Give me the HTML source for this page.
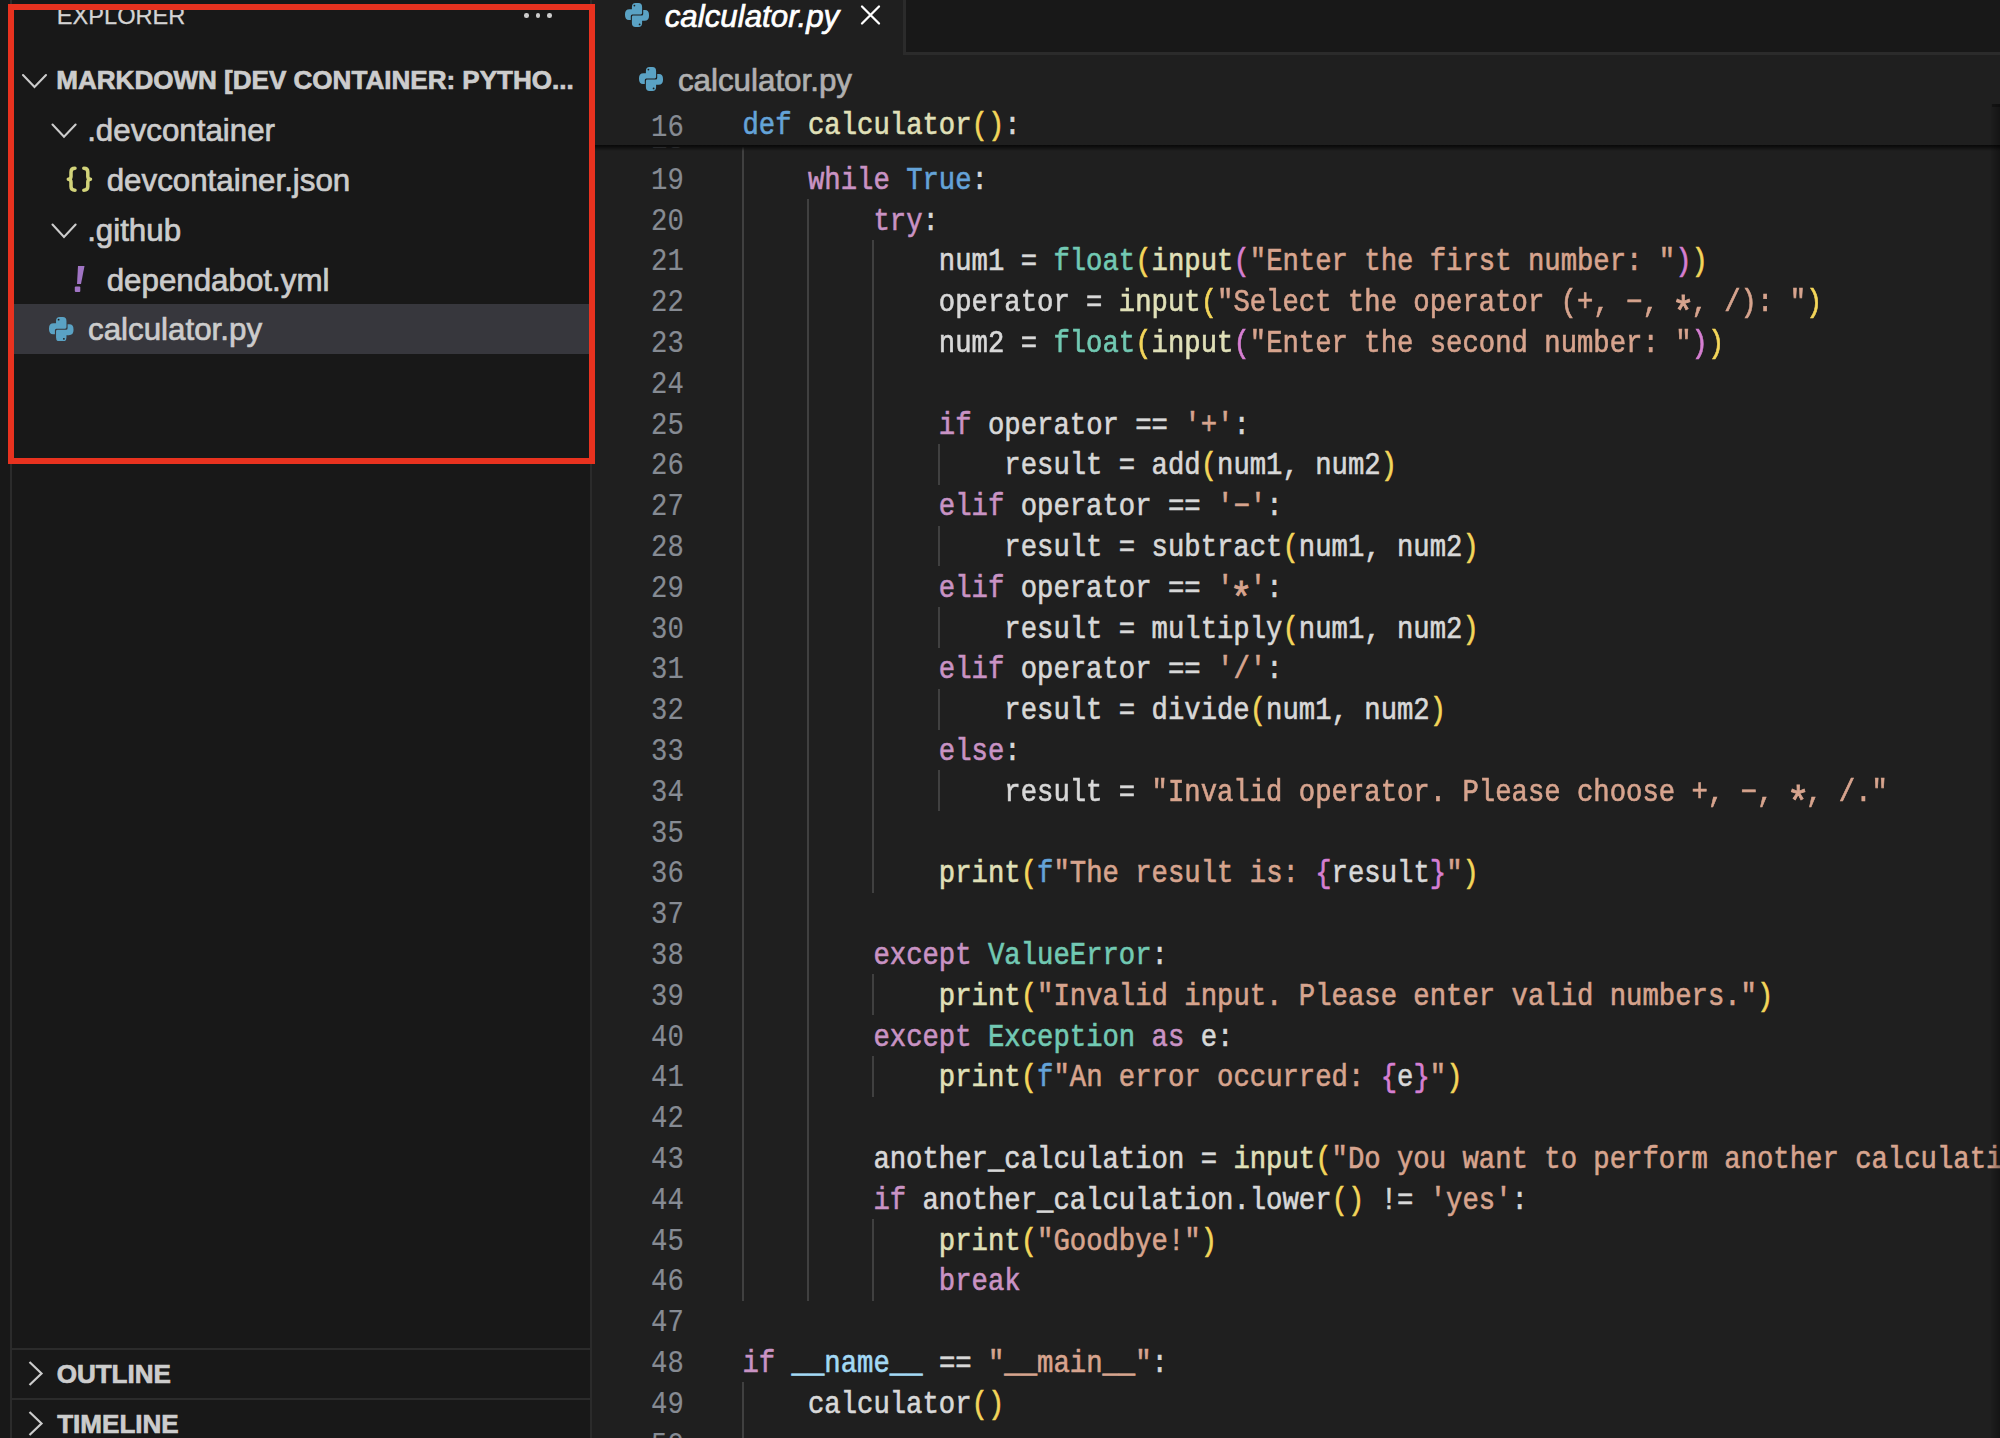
<!DOCTYPE html><html><head><meta charset="utf-8"><style>
*{margin:0;padding:0;box-sizing:border-box}
html,body{width:2000px;height:1438px;overflow:hidden;background:#181818}
.a{position:absolute}
.t{position:absolute;line-height:0;white-space:pre}
.sans{font-family:"Liberation Sans",sans-serif;-webkit-text-stroke:0.7px currentColor}
.mono{font-family:"Liberation Mono",monospace}
.cl{-webkit-text-stroke:0.55px currentColor;position:absolute;line-height:0;white-space:pre;font-family:"Liberation Mono",monospace;font-size:27.279px;color:#d4d4d4;transform:scaleY(1.120);transform-origin:0 7.259px}
.ln{position:absolute;line-height:0;white-space:pre;font-family:"Liberation Mono",monospace;font-size:27.279px;color:#868b93;-webkit-text-stroke:0.15px currentColor;text-align:right;width:200px;transform:scaleY(1.120);transform-origin:0 7.259px}
.g{position:absolute;width:2px;background:#404040}
</style></head><body>

<div class="a" style="left:9.5px;top:0;width:2.3px;height:1438px;background:#2b2b2b"></div>
<div class="a" style="left:589.7px;top:0;width:2.5px;height:1438px;background:#2b2b2b"></div>
<div class="t sans" style="left:56.86px;top:16.02px;font-size:23.60px;color:#d4d4d4;font-weight:normal;font-style:normal;-webkit-text-stroke:0.25px #d4d4d4">EXPLORER</div>
<div class="a" style="left:524.1px;top:13px;width:4.6px;height:4.6px;border-radius:50%;background:#cccccc"></div>
<div class="a" style="left:535.6px;top:13px;width:4.6px;height:4.6px;border-radius:50%;background:#cccccc"></div>
<div class="a" style="left:547.0px;top:13px;width:4.6px;height:4.6px;border-radius:50%;background:#cccccc"></div>
<svg class="a" style="left:0;top:0" width="600" height="1438"><polyline points="23.0,75.0 34.5,87.0 46.0,75.0" fill="none" stroke="#cccccc" stroke-width="2.1" stroke-linecap="round"/></svg>
<div class="t sans" style="left:56.26px;top:80.37px;font-size:26.05px;color:#cccccc;font-weight:bold;font-style:normal;">MARKDOWN [DEV CONTAINER: PYTHO...</div>
<svg class="a" style="left:0;top:0" width="600" height="1438"><polyline points="52.5,124.5 64.0,136.7 75.6,124.5" fill="none" stroke="#cccccc" stroke-width="2.1" stroke-linecap="round"/></svg>
<div class="t sans" style="left:87.14px;top:131.05px;font-size:31.30px;color:#cccccc;font-weight:normal;font-style:normal;">.devcontainer</div>
<svg class="a" style="left:0;top:0" width="120" height="220"><g fill="none" stroke="#d2d37a" stroke-width="3.5" stroke-linecap="round" stroke-linejoin="round"><path d="M75 168.3Q71 168.3 71 172V176.5Q71 179 68.3 179.2Q71 179.4 71 182V186.5Q71 190.2 75 190.2"/><path d="M83.8 168.3Q87.8 168.3 87.8 172V176.5Q87.8 179 90.5 179.2Q87.8 179.4 87.8 182V186.5Q87.8 190.2 83.8 190.2"/></g></svg>
<div class="t sans" style="left:106.69px;top:181.25px;font-size:31.30px;color:#cccccc;font-weight:normal;font-style:normal;">devcontainer.json</div>
<svg class="a" style="left:0;top:0" width="600" height="1438"><polyline points="52.5,224.5 64.0,236.9 75.6,224.5" fill="none" stroke="#cccccc" stroke-width="2.1" stroke-linecap="round"/></svg>
<div class="t sans" style="left:87.14px;top:231.05px;font-size:31.30px;color:#cccccc;font-weight:normal;font-style:normal;">.github</div>
<svg class="a" style="left:0;top:0" width="200" height="400"><polygon points="78,266 84.5,266 81,284 77,284" fill="#a074c4"/><rect x="74.8" y="286.5" width="5.5" height="5.5" rx="1" fill="#a074c4"/></svg>
<div class="t sans" style="left:106.69px;top:281.25px;font-size:31.30px;color:#cccccc;font-weight:normal;font-style:normal;">dependabot.yml</div>
<div class="a" style="left:12px;top:304px;width:577.7px;height:50px;background:#37373d"></div>
<svg class="a" style="left:49.0px;top:316.5px" width="24.5" height="24.5" viewBox="0 0 24 24"><g fill="#5aa2c4"><path d="M6.9 4Q6.9 0 10.5 0H13.5Q17.1 0 17.1 4V10Q17.1 11.4 15.7 11.4H7.3Q5.8 11.4 5.8 12.9V17H4Q0 17 0 12V11Q0 6.2 4.5 6.2H6.9Z"/><path d="M17.1 20Q17.1 24 13.5 24H10.5Q6.9 24 6.9 20V14Q6.9 12.6 8.3 12.6H16.7Q18.2 12.6 18.2 11.1V7H20Q24 7 24 12V13Q24 17.8 19.5 17.8H17.1Z"/></g><circle cx="9.4" cy="2.6" r="0.9" fill="#1f1f1f"/><circle cx="14.6" cy="21.4" r="0.9" fill="#1f1f1f"/></svg>
<div class="t sans" style="left:88.07px;top:330.15px;font-size:31.30px;color:#cccccc;font-weight:normal;font-style:normal;">calculator.py</div>
<div class="a" style="left:12px;top:1347.5px;width:579px;height:2px;background:#2b2b2b"></div>
<div class="a" style="left:12px;top:1397.5px;width:579px;height:2px;background:#2b2b2b"></div>
<svg class="a" style="left:0;top:0" width="100" height="1438"><polyline points="29.5,1362.0 41.5,1373.5 29.5,1385.0" fill="none" stroke="#cccccc" stroke-width="2.2"/></svg>
<div class="t sans" style="left:56.63px;top:1374.07px;font-size:26.05px;color:#cccccc;font-weight:bold;font-style:normal;">OUTLINE</div>
<svg class="a" style="left:0;top:0" width="100" height="1438"><polyline points="29.5,1412.0 41.5,1423.5 29.5,1435.0" fill="none" stroke="#cccccc" stroke-width="2.2"/></svg>
<div class="t sans" style="left:57.19px;top:1424.07px;font-size:26.05px;color:#cccccc;font-weight:bold;font-style:normal;">TIMELINE</div>
<div class="a" style="left:592.2px;top:0;width:1408px;height:1438px;background:#1f1f1f"></div>
<div class="a" style="left:905.5px;top:0;width:1095px;height:53px;background:#181818"></div>
<div class="a" style="left:903px;top:52.3px;width:1097px;height:2.5px;background:#2b2b2b"></div>
<div class="a" style="left:903px;top:0;width:2.5px;height:54.8px;background:#2b2b2b"></div>
<svg class="a" style="left:624.9px;top:2.8px" width="24.0" height="24.0" viewBox="0 0 24 24"><g fill="#5aa2c4"><path d="M6.9 4Q6.9 0 10.5 0H13.5Q17.1 0 17.1 4V10Q17.1 11.4 15.7 11.4H7.3Q5.8 11.4 5.8 12.9V17H4Q0 17 0 12V11Q0 6.2 4.5 6.2H6.9Z"/><path d="M17.1 20Q17.1 24 13.5 24H10.5Q6.9 24 6.9 20V14Q6.9 12.6 8.3 12.6H16.7Q18.2 12.6 18.2 11.1V7H20Q24 7 24 12V13Q24 17.8 19.5 17.8H17.1Z"/></g><circle cx="9.4" cy="2.6" r="0.9" fill="#1f1f1f"/><circle cx="14.6" cy="21.4" r="0.9" fill="#1f1f1f"/></svg>
<div class="t sans" style="left:664.68px;top:16.65px;font-size:31.30px;color:#ffffff;font-weight:normal;font-style:italic;">calculator.py</div>
<svg class="a" style="left:850px;top:0px" width="40" height="30"><path d="M12 6.5L29 23.5M29 6.5L12 23.5" stroke="#ffffff" stroke-width="2.3" stroke-linecap="round"/></svg>
<svg class="a" style="left:638.9px;top:66.9px" width="24.0" height="24.0" viewBox="0 0 24 24"><g fill="#5aa2c4"><path d="M6.9 4Q6.9 0 10.5 0H13.5Q17.1 0 17.1 4V10Q17.1 11.4 15.7 11.4H7.3Q5.8 11.4 5.8 12.9V17H4Q0 17 0 12V11Q0 6.2 4.5 6.2H6.9Z"/><path d="M17.1 20Q17.1 24 13.5 24H10.5Q6.9 24 6.9 20V14Q6.9 12.6 8.3 12.6H16.7Q18.2 12.6 18.2 11.1V7H20Q24 7 24 12V13Q24 17.8 19.5 17.8H17.1Z"/></g><circle cx="9.4" cy="2.6" r="0.9" fill="#1f1f1f"/><circle cx="14.6" cy="21.4" r="0.9" fill="#1f1f1f"/></svg>
<div class="t sans" style="left:677.97px;top:81.25px;font-size:31.30px;color:#b0b0b0;font-weight:normal;font-style:normal;">calculator.py</div>
<div class="g" style="left:741.50px;top:158.40px;height:1142.40px"></div>
<div class="g" style="left:806.98px;top:199.20px;height:1101.60px"></div>
<div class="g" style="left:872.46px;top:240.00px;height:652.80px"></div>
<div class="g" style="left:937.94px;top:444.00px;height:40.80px"></div>
<div class="g" style="left:937.94px;top:525.60px;height:40.80px"></div>
<div class="g" style="left:937.94px;top:607.20px;height:40.80px"></div>
<div class="g" style="left:937.94px;top:688.80px;height:40.80px"></div>
<div class="g" style="left:937.94px;top:770.40px;height:40.80px"></div>
<div class="g" style="left:872.46px;top:974.40px;height:40.80px"></div>
<div class="g" style="left:872.46px;top:1056.00px;height:40.80px"></div>
<div class="g" style="left:872.46px;top:1219.20px;height:81.60px"></div>
<div class="g" style="left:741.50px;top:1382.40px;height:81.60px"></div>
<div class="g" style="left:741.50px;top:147px;height:11.40px"></div>
<div class="ln" style="left:483.80px;top:181.74px">19</div>
<div class="cl" style="left:742.50px;top:181.74px"><span style="color:#d8d8d8">    </span><span style="color:#c993c4">while</span><span style="color:#d8d8d8"> </span><span style="color:#64a3d8">True</span><span style="color:#d8d8d8">:</span></div>
<div class="ln" style="left:483.80px;top:222.54px">20</div>
<div class="cl" style="left:742.50px;top:222.54px"><span style="color:#d8d8d8">        </span><span style="color:#c993c4">try</span><span style="color:#d8d8d8">:</span></div>
<div class="ln" style="left:483.80px;top:263.34px">21</div>
<div class="cl" style="left:742.50px;top:263.34px"><span style="color:#d8d8d8">            num1 = </span><span style="color:#72c9b3">float</span><span style="color:#f4d65a">(</span><span style="color:#e0e0b8">input</span><span style="color:#d67fd2">(</span><span style="color:#d7a48e">"Enter the first number: "</span><span style="color:#d67fd2">)</span><span style="color:#f4d65a">)</span></div>
<div class="ln" style="left:483.80px;top:304.14px">22</div>
<div class="cl" style="left:742.50px;top:304.14px"><span style="color:#d8d8d8">            operator = </span><span style="color:#e0e0b8">input</span><span style="color:#f4d65a">(</span><span style="color:#d7a48e">"Select the operator (+, −, <span style="display:inline-block;transform:translateY(10.9px) scale(1.4)">*</span>, /): "</span><span style="color:#f4d65a">)</span></div>
<div class="ln" style="left:483.80px;top:344.94px">23</div>
<div class="cl" style="left:742.50px;top:344.94px"><span style="color:#d8d8d8">            num2 = </span><span style="color:#72c9b3">float</span><span style="color:#f4d65a">(</span><span style="color:#e0e0b8">input</span><span style="color:#d67fd2">(</span><span style="color:#d7a48e">"Enter the second number: "</span><span style="color:#d67fd2">)</span><span style="color:#f4d65a">)</span></div>
<div class="ln" style="left:483.80px;top:385.74px">24</div>
<div class="ln" style="left:483.80px;top:426.54px">25</div>
<div class="cl" style="left:742.50px;top:426.54px"><span style="color:#d8d8d8">            </span><span style="color:#c993c4">if</span><span style="color:#d8d8d8"> operator == </span><span style="color:#d7a48e">'+'</span><span style="color:#d8d8d8">:</span></div>
<div class="ln" style="left:483.80px;top:467.34px">26</div>
<div class="cl" style="left:742.50px;top:467.34px"><span style="color:#d8d8d8">                result = add</span><span style="color:#f4d65a">(</span><span style="color:#d8d8d8">num1, num2</span><span style="color:#f4d65a">)</span></div>
<div class="ln" style="left:483.80px;top:508.14px">27</div>
<div class="cl" style="left:742.50px;top:508.14px"><span style="color:#d8d8d8">            </span><span style="color:#c993c4">elif</span><span style="color:#d8d8d8"> operator == </span><span style="color:#d7a48e">'−'</span><span style="color:#d8d8d8">:</span></div>
<div class="ln" style="left:483.80px;top:548.94px">28</div>
<div class="cl" style="left:742.50px;top:548.94px"><span style="color:#d8d8d8">                result = subtract</span><span style="color:#f4d65a">(</span><span style="color:#d8d8d8">num1, num2</span><span style="color:#f4d65a">)</span></div>
<div class="ln" style="left:483.80px;top:589.74px">29</div>
<div class="cl" style="left:742.50px;top:589.74px"><span style="color:#d8d8d8">            </span><span style="color:#c993c4">elif</span><span style="color:#d8d8d8"> operator == </span><span style="color:#d7a48e">'<span style="display:inline-block;transform:translateY(10.9px) scale(1.4)">*</span>'</span><span style="color:#d8d8d8">:</span></div>
<div class="ln" style="left:483.80px;top:630.54px">30</div>
<div class="cl" style="left:742.50px;top:630.54px"><span style="color:#d8d8d8">                result = multiply</span><span style="color:#f4d65a">(</span><span style="color:#d8d8d8">num1, num2</span><span style="color:#f4d65a">)</span></div>
<div class="ln" style="left:483.80px;top:671.34px">31</div>
<div class="cl" style="left:742.50px;top:671.34px"><span style="color:#d8d8d8">            </span><span style="color:#c993c4">elif</span><span style="color:#d8d8d8"> operator == </span><span style="color:#d7a48e">'/'</span><span style="color:#d8d8d8">:</span></div>
<div class="ln" style="left:483.80px;top:712.14px">32</div>
<div class="cl" style="left:742.50px;top:712.14px"><span style="color:#d8d8d8">                result = divide</span><span style="color:#f4d65a">(</span><span style="color:#d8d8d8">num1, num2</span><span style="color:#f4d65a">)</span></div>
<div class="ln" style="left:483.80px;top:752.94px">33</div>
<div class="cl" style="left:742.50px;top:752.94px"><span style="color:#d8d8d8">            </span><span style="color:#c993c4">else</span><span style="color:#d8d8d8">:</span></div>
<div class="ln" style="left:483.80px;top:793.74px">34</div>
<div class="cl" style="left:742.50px;top:793.74px"><span style="color:#d8d8d8">                result = </span><span style="color:#d7a48e">"Invalid operator. Please choose +, −, <span style="display:inline-block;transform:translateY(10.9px) scale(1.4)">*</span>, /."</span></div>
<div class="ln" style="left:483.80px;top:834.54px">35</div>
<div class="ln" style="left:483.80px;top:875.34px">36</div>
<div class="cl" style="left:742.50px;top:875.34px"><span style="color:#d8d8d8">            </span><span style="color:#e0e0b8">print</span><span style="color:#f4d65a">(</span><span style="color:#64a3d8">f</span><span style="color:#d7a48e">"The result is: </span><span style="color:#d67fd2">{</span><span style="color:#d8d8d8">result</span><span style="color:#d67fd2">}</span><span style="color:#d7a48e">"</span><span style="color:#f4d65a">)</span></div>
<div class="ln" style="left:483.80px;top:916.14px">37</div>
<div class="ln" style="left:483.80px;top:956.94px">38</div>
<div class="cl" style="left:742.50px;top:956.94px"><span style="color:#d8d8d8">        </span><span style="color:#c993c4">except</span><span style="color:#d8d8d8"> </span><span style="color:#72c9b3">ValueError</span><span style="color:#d8d8d8">:</span></div>
<div class="ln" style="left:483.80px;top:997.74px">39</div>
<div class="cl" style="left:742.50px;top:997.74px"><span style="color:#d8d8d8">            </span><span style="color:#e0e0b8">print</span><span style="color:#f4d65a">(</span><span style="color:#d7a48e">"Invalid input. Please enter valid numbers."</span><span style="color:#f4d65a">)</span></div>
<div class="ln" style="left:483.80px;top:1038.54px">40</div>
<div class="cl" style="left:742.50px;top:1038.54px"><span style="color:#d8d8d8">        </span><span style="color:#c993c4">except</span><span style="color:#d8d8d8"> </span><span style="color:#72c9b3">Exception</span><span style="color:#d8d8d8"> </span><span style="color:#c993c4">as</span><span style="color:#d8d8d8"> e:</span></div>
<div class="ln" style="left:483.80px;top:1079.34px">41</div>
<div class="cl" style="left:742.50px;top:1079.34px"><span style="color:#d8d8d8">            </span><span style="color:#e0e0b8">print</span><span style="color:#f4d65a">(</span><span style="color:#64a3d8">f</span><span style="color:#d7a48e">"An error occurred: </span><span style="color:#d67fd2">{</span><span style="color:#d8d8d8">e</span><span style="color:#d67fd2">}</span><span style="color:#d7a48e">"</span><span style="color:#f4d65a">)</span></div>
<div class="ln" style="left:483.80px;top:1120.14px">42</div>
<div class="ln" style="left:483.80px;top:1160.94px">43</div>
<div class="cl" style="left:742.50px;top:1160.94px"><span style="color:#d8d8d8">        another_calculation = </span><span style="color:#e0e0b8">input</span><span style="color:#f4d65a">(</span><span style="color:#d7a48e">"Do you want to perform another calculation? (yes/no): "</span><span style="color:#f4d65a">)</span></div>
<div class="ln" style="left:483.80px;top:1201.74px">44</div>
<div class="cl" style="left:742.50px;top:1201.74px"><span style="color:#d8d8d8">        </span><span style="color:#c993c4">if</span><span style="color:#d8d8d8"> another_calculation.lower</span><span style="color:#f4d65a">()</span><span style="color:#d8d8d8"> != </span><span style="color:#d7a48e">'yes'</span><span style="color:#d8d8d8">:</span></div>
<div class="ln" style="left:483.80px;top:1242.54px">45</div>
<div class="cl" style="left:742.50px;top:1242.54px"><span style="color:#d8d8d8">            </span><span style="color:#e0e0b8">print</span><span style="color:#f4d65a">(</span><span style="color:#d7a48e">"Goodbye!"</span><span style="color:#f4d65a">)</span></div>
<div class="ln" style="left:483.80px;top:1283.34px">46</div>
<div class="cl" style="left:742.50px;top:1283.34px"><span style="color:#d8d8d8">            </span><span style="color:#c993c4">break</span></div>
<div class="ln" style="left:483.80px;top:1324.14px">47</div>
<div class="ln" style="left:483.80px;top:1364.94px">48</div>
<div class="cl" style="left:742.50px;top:1364.94px"><span style="color:#c993c4">if</span><span style="color:#d8d8d8"> </span><span style="color:#a3d9f5">__name__</span><span style="color:#d8d8d8"> == </span><span style="color:#d7a48e">"__main__"</span><span style="color:#d8d8d8">:</span></div>
<div class="ln" style="left:483.80px;top:1405.74px">49</div>
<div class="cl" style="left:742.50px;top:1405.74px"><span style="color:#d8d8d8">    calculator</span><span style="color:#f4d65a">()</span></div>
<div class="ln" style="left:483.80px;top:1446.54px">50</div>
<div class="ln" style="left:483.80px;top:140.94px">18</div>
<div class="a" style="left:592.2px;top:104px;width:1408px;height:41px;background:#1f1f1f"></div>
<div class="a" style="left:592.2px;top:145px;width:1408px;height:6px;background:linear-gradient(#090909 0,#0d0d0d 25%,rgba(31,31,31,0) 100%)"></div>
<div class="ln" style="left:483.80px;top:128.94px">16</div>
<div class="cl" style="left:742.50px;top:127.14px"><span style="color:#64a3d8">def</span><span style="color:#d8d8d8"> </span><span style="color:#e0e0b8">calculator</span><span style="color:#f4d65a">()</span><span style="color:#d8d8d8">:</span></div>
<div class="a" style="left:1991px;top:104px;width:9px;height:1334px;background:linear-gradient(90deg,rgba(0,0,0,0.05),rgba(0,0,0,0.35))"></div><div class="a" style="left:1992px;top:104px;width:8px;height:3px;background:rgba(0,0,0,0.3)"></div>
<div class="a" style="left:8px;top:3.5px;width:587px;height:460.5px;border:6.5px solid #e8321f"></div>
</body></html>
